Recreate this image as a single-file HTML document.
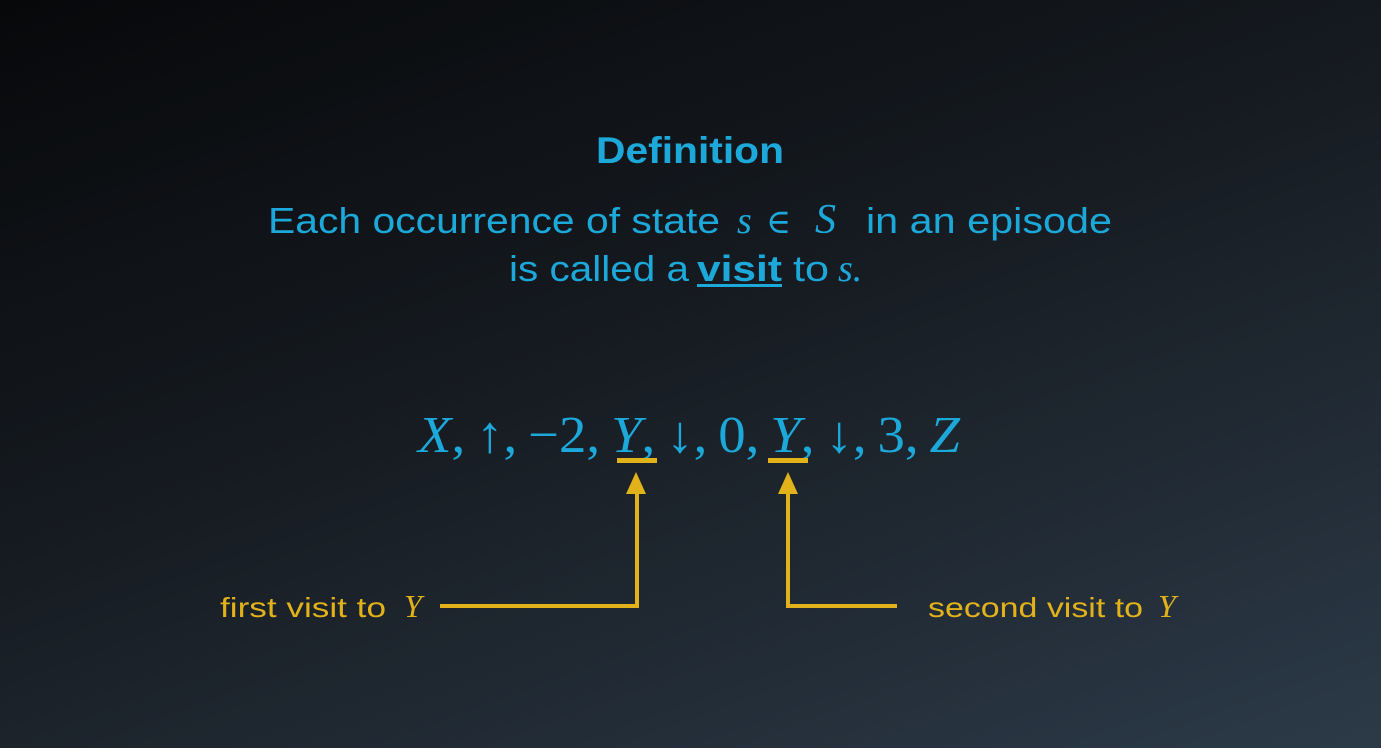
<!DOCTYPE html>
<html><head><style>
html,body{margin:0;padding:0}
body{width:1381px;height:748px;overflow:hidden;background:linear-gradient(160deg,#07080a 0%,#161b21 45%,#2c3a48 100%);position:relative}
svg{position:absolute;left:0;top:0}
</style></head><body>
<svg width="1381" height="748" viewBox="0 0 1381 748">
<g font-family="Liberation Sans, DejaVu Sans, sans-serif" fill="#1ca9da">
<text x="596" y="163" font-size="37" font-weight="bold" textLength="188" lengthAdjust="spacingAndGlyphs">Definition</text>
<text x="268" y="233" font-size="36" textLength="452" lengthAdjust="spacingAndGlyphs">Each occurrence of state</text>
<text x="737" y="233" font-size="38" font-family="Liberation Serif, serif" font-style="italic">s</text>
<text x="766" y="233" font-size="34" font-family="DejaVu Serif, serif">∈</text>
<text x="815" y="233" font-size="42" font-family="Liberation Serif, serif" font-style="italic">S</text>
<text x="866" y="233" font-size="36" textLength="246" lengthAdjust="spacingAndGlyphs">in an episode</text>
<text x="509" y="281" font-size="36" textLength="180" lengthAdjust="spacingAndGlyphs">is called a</text>
<text x="697" y="281" font-size="36" font-weight="bold" textLength="85" lengthAdjust="spacingAndGlyphs">visit</text>
<rect x="697" y="284" width="85" height="3"/>
<text x="793" y="281" font-size="36" textLength="36" lengthAdjust="spacingAndGlyphs">to</text>
<text x="838" y="281" font-size="38" font-family="Liberation Serif, serif" font-style="italic">s.</text>
<text x="418" y="452" font-size="52" font-family="Liberation Serif, serif" textLength="542" lengthAdjust="spacingAndGlyphs"><tspan font-style="italic">X</tspan>,&#8201;↑,&#8201;−2,&#8201;<tspan font-style="italic">Y</tspan>,&#8201;↓,&#8201;0,&#8201;<tspan font-style="italic">Y</tspan>,&#8201;↓,&#8201;3,&#8201;<tspan font-style="italic">Z</tspan></text>
</g>
<g fill="#e2b21a" stroke="none">
<rect x="617" y="458" width="40" height="5"/>
<rect x="768" y="458" width="40" height="5"/>
<polygon points="636,472 626,494 646,494"/>
<polygon points="788,472 778,494 798,494"/>
</g>
<g stroke="#e2b21a" stroke-width="4" fill="none">
<polyline points="440,606 637,606 637,490"/>
<polyline points="897,606 788,606 788,490"/>
</g>
<g fill="#e2b21a" font-family="Liberation Sans, DejaVu Sans, sans-serif" font-size="28">
<text x="220" y="617" textLength="166" lengthAdjust="spacingAndGlyphs">first visit to</text>
<text x="404" y="617" font-family="Liberation Serif, serif" font-style="italic" font-size="32">Y</text>
<text x="928" y="617" textLength="215" lengthAdjust="spacingAndGlyphs">second visit to</text>
<text x="1158" y="617" font-family="Liberation Serif, serif" font-style="italic" font-size="32">Y</text>
</g>
</svg>
</body></html>
